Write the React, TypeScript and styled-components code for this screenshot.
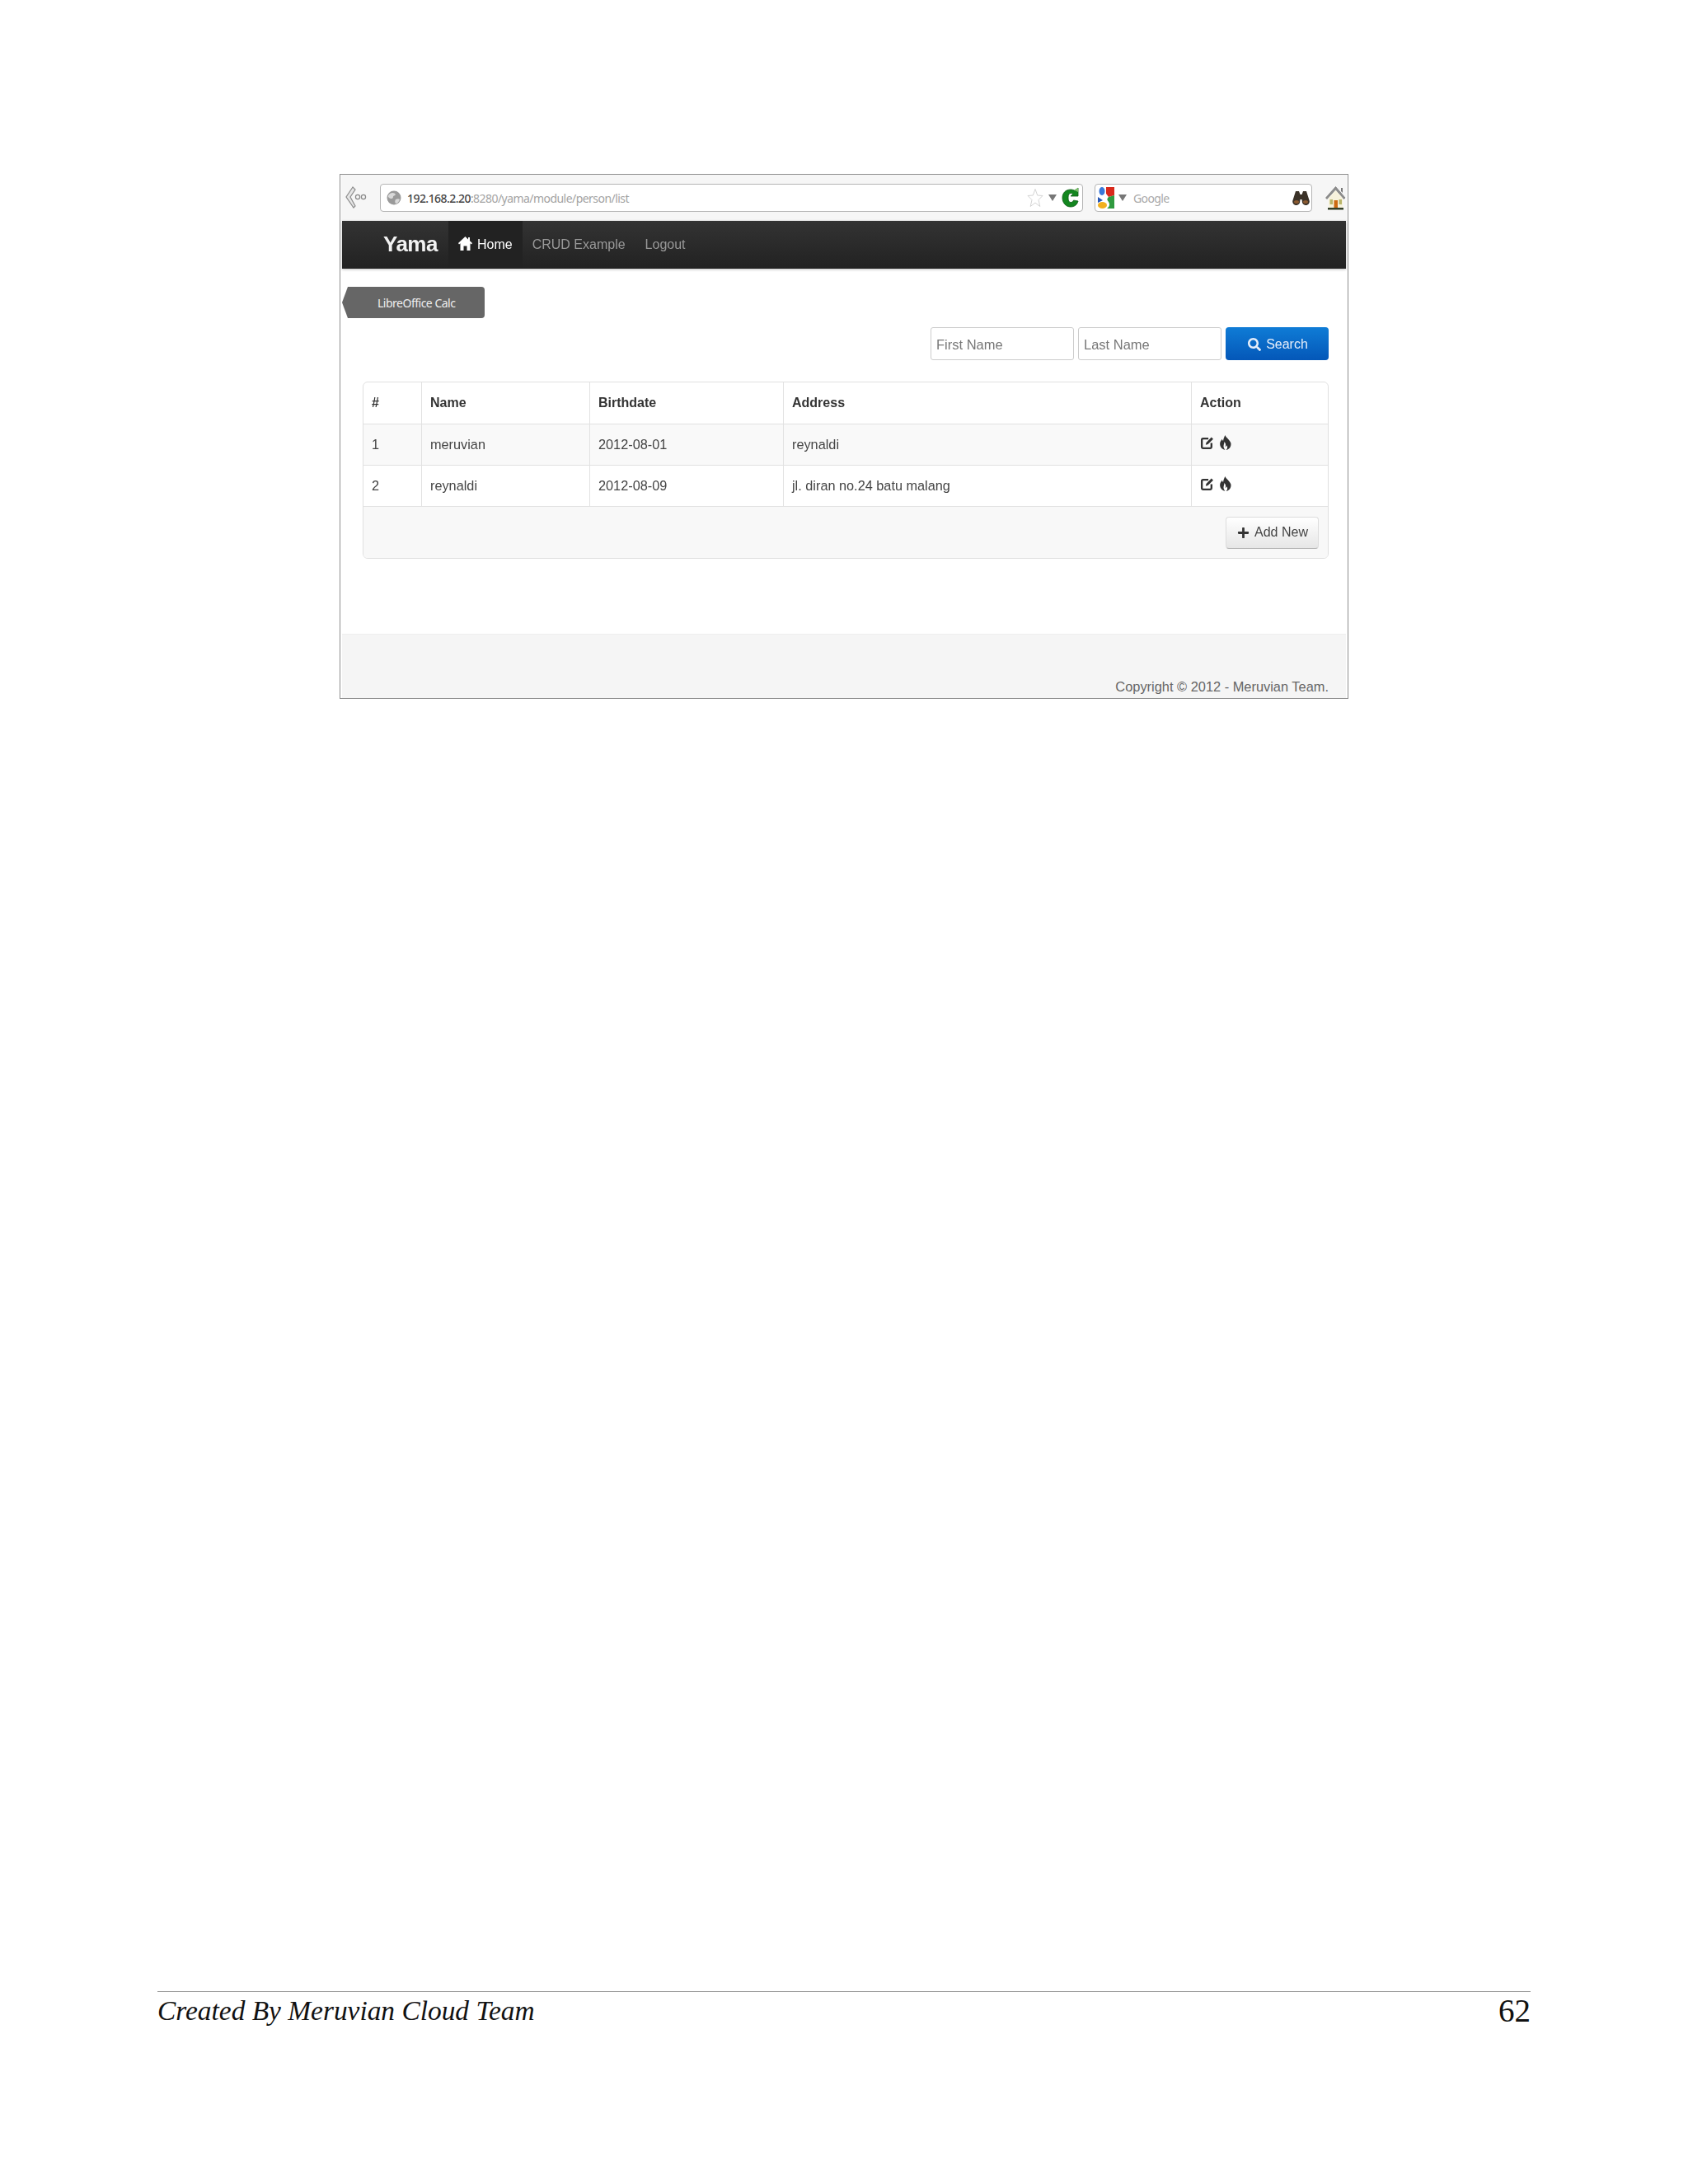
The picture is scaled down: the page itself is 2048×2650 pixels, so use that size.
import { FaPlus, FaSearch } from "react-icons/fa";
import styled, { createGlobalStyle } from "styled-components";

const GlobalStyle = createGlobalStyle`
  html, body {
    margin: 0;
    padding: 0;
    background: #fff;
  }
`;

const rows = [
  { id: 1, name: "meruvian", birthdate: "2012-08-01", address: "reynaldi" },
  { id: 2, name: "reynaldi", birthdate: "2012-08-09", address: "jl. diran no.24 batu malang" },
];

const BackIcon = () => (
  <svg width="28" height="30" viewBox="0 0 28 30" fill="none">
    <path d="M10 2 2 14l9 13 2-2-6-11 6-9z" fill="#e6e6e6" stroke="#8c8c8c" strokeWidth="1.2" />
    <circle cx="16" cy="14" r="2.6" stroke="#888" strokeWidth="1.2" />
    <circle cx="23" cy="14" r="2.6" stroke="#888" strokeWidth="1.2" />
  </svg>
);

const GlobeIcon = () => (
  <svg width="18" height="20" viewBox="0 0 18 20">
    <circle cx="9" cy="10" r="8.5" fill="#9a9a9a" />
    <path d="M4 5c3-2 6-1 7 1-1 2-3 1-3 3s-3 3-5 1-1-3 1-5zM11 12c2-1 4-1 5 0-1 3-3 5-5 5-1-2-1-3 0-5z" fill="#d9d9d9" />
  </svg>
);

const StarIcon = () => (
  <svg width="20" height="24" viewBox="0 0 20 24" fill="#fff">
    <path d="M10 1.5 12.7 9 19 9.5l-5 5 1.8 8L10 18l-5.800 4.500L6 14.500l-5-5L7.300 9z" stroke="#d4d4d4" strokeWidth="1" />
  </svg>
);

const Caret = () => (
  <svg width="10" height="8" viewBox="0 0 10 8">
    <path d="M0 0h10L5 8z" fill="#777" />
  </svg>
);

const ReloadIcon = () => (
  <svg width="22" height="26" viewBox="0 0 22 26">
    <path d="M20 17c-1 4-4 7-9 7-6 0-10-5-10-11S5 3 11 3c2 0 4 .5 5 1.500L20 1v10h-9l3-3c-1-.5-2-.5-3-.5-2 0-3 2-3 5.500s1 5.500 3 5.500c2 0 3-1 3.500-2.500z" fill="#13861f" stroke="#0c5c15" strokeWidth=".8" />
    <path d="M15 3.500 20 1v5z" fill="#7cc06a" />
  </svg>
);

const GoogleIcon = () => (
  <svg width="20" height="28" viewBox="0 0 20 28">
    <path d="M10 1h10v10l-7 2-3-4z" fill="#d9291c" />
    <path d="M13 13l7-2v16H11c3-2 4-5 2-8-1-2-3-3 0-6z" fill="#2f9a3f" />
    <ellipse cx="5" cy="6" rx="3.500" ry="5" fill="#3a78d8" />
    <path d="M0 13l6 4-6 3z" fill="#2757b5" />
    <ellipse cx="5.500" cy="23" rx="5.500" ry="4" fill="#f2b01e" />
  </svg>
);

const BinocularsIcon = () => (
  <svg width="21" height="18" viewBox="0 0 21 18">
    <path d="M4 1h4l1.500 4h2L13 1h4l3.500 11a4.500 4.500 0 0 1-8.500 3l-.5-4h-2L9 15a4.500 4.500 0 0 1-8.500-3z" fill="#3b3228" />
    <ellipse cx="5" cy="14" rx="3" ry="2" fill="#8a5a30" />
    <ellipse cx="16" cy="14" rx="3" ry="2" fill="#8a5a30" />
  </svg>
);

const HouseIcon = () => (
  <svg width="25" height="30" viewBox="0 0 25 30">
    <path d="M12.500 1.500 0.500 15l1.500 1.500L12.500 5l10 11.500 1.500-1.500z" fill="#8f8f8f" stroke="#666" strokeWidth=".6" />
    <path d="M19 3h2v6l-2-2z" fill="#777" />
    <path d="M4 15.500 12.500 6 21 15.500V28H4z" fill="#f7f2dc" />
    <rect x="10.500" y="18" width="4.500" height="10" fill="#cc6a12" />
    <rect x="5.500" y="17" width="3.500" height="6" fill="#b9b56a" />
    <rect x="16.500" y="17" width="3.500" height="6" fill="#b9b56a" />
    <rect x="3" y="27" width="19" height="2.500" fill="#34412a" />
  </svg>
);

const NavHomeIcon = () => (
  <svg width="17" height="17" viewBox="0 0 17 17" fill="#fff">
    <path d="M8.500 0 0 8l1 1.500 1.500-1.200V17h4v-5.500h4V17h4V8.300L16 9.500 17 8l-3-2.800V1h-2v2.400z" />
  </svg>
);

const EditIcon = () => (
  <svg width="17" height="17" viewBox="0 0 16 16" fill="none" stroke="#333">
    <path d="M9.500 3H3.500A1.500 1.500 0 0 0 2 4.500v8A1.500 1.500 0 0 0 3.500 14h8a1.500 1.500 0 0 0 1.500-1.500V8" strokeWidth="2.200" />
    <path d="M6.500 10l.5-2.500L13 1.500l2 2-6 6z" fill="#333" stroke="none" />
  </svg>
);

const FlameIcon = () => (
  <svg width="14" height="18" viewBox="0 0 13 17" fill="#333">
    <path d="M6 0c1 3 5 5 6.500 9 .8 4-2 7.500-5.500 8 1.500-1.500 2-3.500 1-5.500-.5 1-1 1.500-1.700 1.700C7 11 6.500 9 5 7.500 5 10 3.500 12 4.500 14.500c.3 1 1 2 1.500 2.500-3.500-.5-6-3.500-6-7 0-2.500 1.500-4 2.500-5.500.2 1 .5 1.700 1.200 2.200C4 4 5 2 6 0z" />
  </svg>
);

const App = () => {
  return (
    <Page>
      <GlobalStyle />
      <Shot>
        <Chrome>
          <BackButton>
            <BackIcon />
          </BackButton>
          <UrlBar>
            <GlobeIcon />
            <Url>
              <b>192.168.2.20</b>:8280/yama/module/person/list
            </Url>
            <UrlTools>
              <StarIcon />
              <Caret />
              <ReloadIcon />
            </UrlTools>
          </UrlBar>
          <SearchBar>
            <GoogleIcon />
            <Caret />
            <SearchHint>Google</SearchHint>
            <BinocularsIcon />
          </SearchBar>
          <HouseButton>
            <HouseIcon />
          </HouseButton>
        </Chrome>
        <Navbar>
          <Brand>Yama</Brand>
          <NavItem $active>
            <NavHomeIcon /> Home
          </NavItem>
          <NavItem>CRUD Example</NavItem>
          <NavItem>Logout</NavItem>
        </Navbar>
        <Content>
          <TaskTag>LibreOffice Calc</TaskTag>
          <SearchForm>
            <TextBox>First Name</TextBox>
            <TextBox>Last Name</TextBox>
            <PrimaryButton>
              <FaSearch size={16} /> Search
            </PrimaryButton>
          </SearchForm>
          <TableFrame>
            <DataTable>
              <colgroup>
                <col style={{ width: 70 }} />
                <col style={{ width: 204 }} />
                <col style={{ width: 235 }} />
                <col style={{ width: 495 }} />
                <col />
              </colgroup>
              <thead>
                <tr>
                  <th>#</th>
                  <th>Name</th>
                  <th>Birthdate</th>
                  <th>Address</th>
                  <th>Action</th>
                </tr>
              </thead>
              <tbody>
                {rows.map((row) => (
                  <tr key={row.id}>
                    <td>{row.id}</td>
                    <td>{row.name}</td>
                    <td>{row.birthdate}</td>
                    <td>{row.address}</td>
                    <td>
                      <ActionIcons>
                        <EditIcon />
                        <FlameIcon />
                      </ActionIcons>
                    </td>
                  </tr>
                ))}
              </tbody>
            </DataTable>
            <TableFooter>
              <DefaultButton>
                <FaPlus size={15} color="#333" /> Add New
              </DefaultButton>
            </TableFooter>
          </TableFrame>
        </Content>
        <ShotFooter>Copyright © 2012 - Meruvian Team.</ShotFooter>
      </Shot>
      <PageFooter>
        <FooterTitle>Created By Meruvian Cloud Team</FooterTitle>
        <PageNumber>62</PageNumber>
      </PageFooter>
    </Page>
  );
};

export default App;

const Page = styled.div`
  box-sizing: border-box;
  width: 2048px;
  height: 2650px;
  padding: 211px 0 0;
  display: flex;
  flex-direction: column;
  background: #fff;
  font-family: "Liberation Sans", Arial, sans-serif;
`;

const Shot = styled.div`
  box-sizing: border-box;
  width: 1224px;
  height: 637px;
  margin-left: 412px;
  border: 1.5px solid #8e8e8e;
  padding: 0 2px;
  display: flex;
  flex-direction: column;
  filter: blur(0.4px);
`;

const Chrome = styled.div`
  height: 56px;
  margin: 0 -1px;
  display: flex;
  align-items: center;
  background: #f6f6f6;
  flex: none;
`;

const BackButton = styled.div`
  width: 47px;
  padding-left: 4px;
  box-sizing: border-box;
  display: flex;
  align-items: center;
`;

const UrlBar = styled.div`
  box-sizing: border-box;
  width: 853px;
  height: 34px;
  padding: 0 3px 0 7px;
  display: flex;
  align-items: center;
  gap: 7px;
  background: #fff;
  border: 1.5px solid #b4b4b4;
  border-radius: 4px;
`;

const Url = styled.div`
  flex: 1;
  font-family: "Noto Sans", sans-serif;
  font-size: 14px;
  letter-spacing: -0.55px;
  color: #a3a3a3;

  b {
    font-weight: 500;
    color: #444;
  }
`;

const UrlTools = styled.div`
  display: flex;
  align-items: center;
  gap: 6px;
`;

const SearchBar = styled.div`
  box-sizing: border-box;
  width: 264px;
  height: 34px;
  margin-left: 14px;
  padding: 0 2px 0 3px;
  display: flex;
  align-items: center;
  gap: 5px;
  background: #fff;
  border: 1.5px solid #b4b4b4;
  border-radius: 4px;
`;

const SearchHint = styled.div`
  flex: 1;
  margin-left: 3px;
  font-family: "Noto Sans", sans-serif;
  font-size: 14px;
  letter-spacing: -0.6px;
  color: #aaa;
`;

const HouseButton = styled.div`
  margin-left: 16px;
  display: flex;
`;

const Navbar = styled.div`
  height: 58px;
  flex: none;
  display: flex;
  align-items: stretch;
  padding-left: 50px;
  background: linear-gradient(#333, #222);
  box-shadow: 0 1px 3px rgba(0, 0, 0, 0.25);
`;

const Brand = styled.div`
  width: 79px;
  padding-bottom: 2px;
  display: flex;
  align-items: center;
  font-size: 26px;
  font-weight: 700;
  letter-spacing: -0.5px;
  color: #f2f2f2;

  & + div svg {
    margin-top: -3px;
  }
`;

const NavItem = styled.div<{ $active?: boolean }>`
  display: flex;
  align-items: center;
  gap: 6px;
  padding: 0 12px;
  font-size: 16px;
  color: ${(p) => (p.$active ? "#fff" : "#999")};
  background: ${(p) => (p.$active ? "#222" : "transparent")};
`;

const Content = styled.div`
  flex: 1;
  display: flex;
  flex-direction: column;
  padding: 22px 21px 0 0;
`;

const TaskTag = styled.div`
  box-sizing: border-box;
  width: 173px;
  height: 38px;
  padding-left: 43px;
  display: flex;
  align-items: center;
  font-family: "Noto Sans", sans-serif;
  font-size: 14px;
  letter-spacing: -0.5px;
  color: #eee;
  background: #666;
  clip-path: polygon(7px 0, 100% 0, 100% 100%, 7px 100%, 0 50%);
  border-radius: 0 4px 4px 0;
`;

const SearchForm = styled.div`
  margin-top: 11px;
  display: flex;
  justify-content: flex-end;
  gap: 5px;
`;

const TextBox = styled.div`
  box-sizing: border-box;
  width: 174px;
  height: 40px;
  padding: 2px 0 0 6px;
  display: flex;
  align-items: center;
  font-size: 16.500px;
  color: #777;
  background: #fff;
  border: 1.5px solid #ccc;
  border-radius: 3px;
`;

const PrimaryButton = styled.div`
  box-sizing: border-box;
  width: 125px;
  height: 40px;
  padding: 1px 0 0 2px;
  display: flex;
  align-items: center;
  justify-content: center;
  gap: 6px;
  font-size: 16px;
  color: #e6eefa;
  background: linear-gradient(#0f7cd6, #0457b8);
  border-radius: 4px;
`;

const TableFrame = styled.div`
  margin: 26px 0 0 25px;
  border: 1.5px solid #e0e0e0;
  border-radius: 6px;
  overflow: hidden;
`;

const DataTable = styled.table`
  width: 100%;
  table-layout: fixed;
  border-collapse: collapse;
  font-size: 16.300px;
  color: #444;

  th,
  td {
    box-sizing: border-box;
    height: 50px;
    padding: 1px 10px 0 10.500px;
    text-align: left;
    border-left: 1.5px solid #e2e2e2;
    border-bottom: 1.5px solid #e2e2e2;
  }

  th:first-child,
  td:first-child {
    border-left: 0;
    padding-left: 10px;
  }

  th {
    font-size: 16px;
    font-weight: 700;
    color: #333;
  }

  tbody tr:nth-child(odd) td {
    background: #f9f9f9;
  }
`;

const ActionIcons = styled.div`
  display: flex;
  align-items: center;
  gap: 7px;
  margin-top: -5px;
  color: #333;
`;

const TableFooter = styled.div`
  height: 62px;
  padding: 12px 11px 0 0;
  box-sizing: border-box;
  display: flex;
  justify-content: flex-end;
  align-items: flex-start;
  background: #f8f8f8;
`;

const DefaultButton = styled.div`
  box-sizing: border-box;
  width: 113px;
  height: 39px;
  padding-left: 1px;
  display: flex;
  align-items: center;
  justify-content: center;
  gap: 6px;
  font-size: 16px;
  color: #444;
  background: linear-gradient(#fff, #e6e6e6);
  border: 1px solid #ddd;
  border-bottom-color: #b5b5b5;
  border-radius: 4px;
`;

const ShotFooter = styled.div`
  box-sizing: border-box;
  height: 78px;
  flex: none;
  padding: 0 21px 3px 0;
  display: flex;
  align-items: flex-end;
  justify-content: flex-end;
  font-size: 16.400px;
  line-height: 22px;
  color: #666;
  background: #f5f5f5;
  border-top: 1.5px solid #eee;
`;

const PageFooter = styled.div`
  box-sizing: border-box;
  width: 1666px;
  margin: auto 0 192px 191px;
  padding-top: 4px;
  border-top: 1.5px solid #999;
  display: flex;
  justify-content: space-between;
  align-items: center;
  height: 42px;
  font-family: "Liberation Serif", "Times New Roman", serif;
  color: #111;
`;

const FooterTitle = styled.div`
  font-size: 33.400px;
  font-style: italic;
`;

const PageNumber = styled.div`
  font-size: 39px;
`;
